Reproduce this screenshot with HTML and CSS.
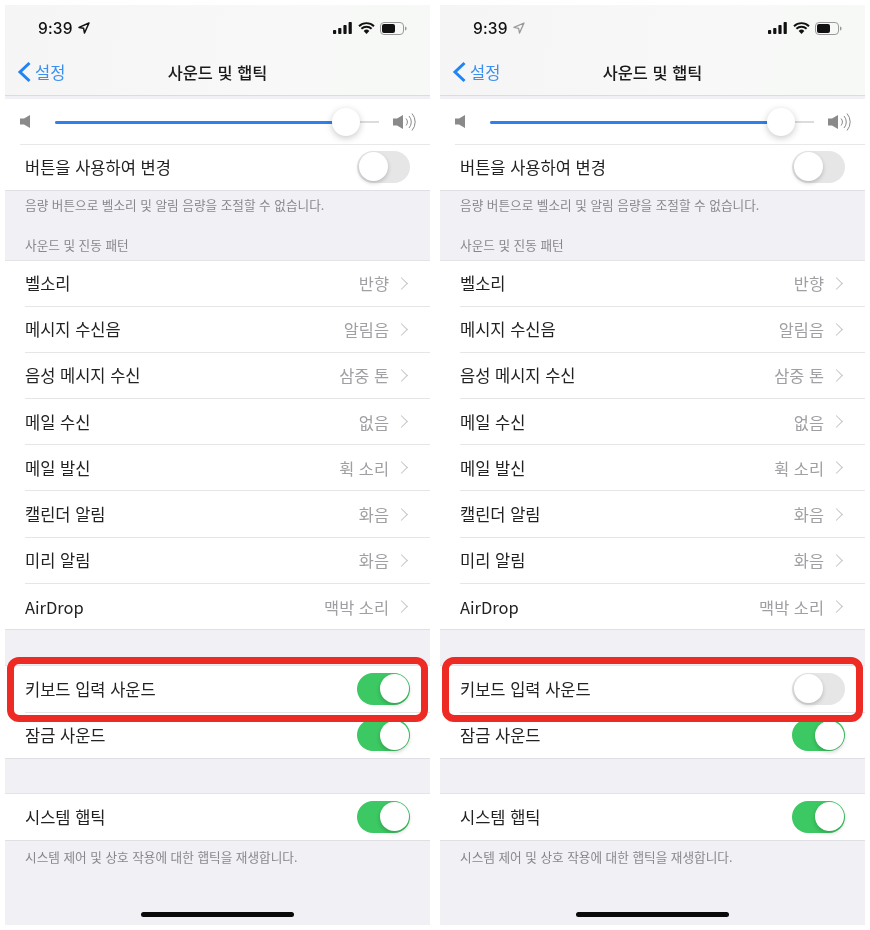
FILE: index.html
```html
<!DOCTYPE html>
<html lang="ko">
<head>
<meta charset="utf-8">
<title>사운드 및 햅틱</title>
<link rel="stylesheet" href="styles.css">
</head>
<body>
<main class="page">

<section class="phone">
  <header class="bar">
    <div class="status">
      <span class="time">9:39</span>
      <svg class="loc" width="12" height="12" viewBox="0 0 12 12"><path d="M11 1 1 5.400l4.600.9.9 4.700z" fill="none" stroke="#111" stroke-width="1.500" stroke-linejoin="round"/></svg>
      <span class="grow"></span>
      <svg width="20" height="12" viewBox="0 0 20 12"><rect x="0" y="8" width="3.200" height="4" rx=".8"/><rect x="5.200" y="6" width="3.200" height="6" rx=".8"/><rect x="10.400" y="3" width="3.200" height="9" rx=".8"/><rect x="15.600" y="0" width="3.200" height="12" rx=".8"/></svg>
      <svg class="wifi" width="17" height="12" viewBox="0 0 17 12"><path d="M1 4.200a10.800 10.800 0 0 1 15 0M3.400 6.800a7.300 7.300 0 0 1 10.200 0" fill="none" stroke="#111" stroke-width="1.900"/><path d="M5.700 8.900a4 4 0 0 1 5.600 0L8.500 12z" fill="#111"/></svg>
      <svg width="27" height="13" viewBox="0 0 27 13"><rect x=".5" y=".5" width="23" height="12" rx="3.500" fill="none" stroke="#999"/><rect x="2" y="2" width="13" height="9" rx="2" fill="#111"/><path d="M25 4.500c1 .3 1.600 1 1.600 2s-.6 1.700-1.600 2z" fill="#999"/></svg>
    </div>
    <nav class="nav">
      <span class="back">
        <svg width="15" height="22" viewBox="0 0 15 22"><path d="M12.500 2 3 11l9.500 9" fill="none" stroke="#1f84f5" stroke-width="3"/></svg>
        설정
      </span>
      <h1 class="title">사운드 및 햅틱</h1>
    </nav>
  </header>

  <div class="group first">
    <div class="slider">
      <svg class="vol-low" width="11" height="13" viewBox="0 0 11 13"><path d="M0 3.500h4L10 0v13L4 9.500H0z" fill="#8a8a8a"/></svg>
      <div class="track"><div class="fill"></div><div class="thumb"></div></div>
      <svg width="24" height="22" viewBox="0 0 24 22"><path d="M1 7.500h4l6-3.500v14l-6-3.500H1z" fill="#8a8a8a"/><path d="M14 7.500a5 5 0 0 1 0 7M17 5a9 9 0 0 1 0 12M20 2.500a13 13 0 0 1 0 17" fill="none" stroke="#8a8a8a" stroke-width="1"/></svg>
    </div>
    <div class="row last"><span class="label">버튼을 사용하여 변경</span><span class="toggle"></span></div>
  </div>
  <p class="note">음량 버튼으로 벨소리 및 알림 음량을 조절할 수 없습니다.</p>
  <p class="caption">사운드 및 진동 패턴</p>

  <div class="group">
    <div class="row"><span class="label">벨소리</span><span class="value">반향</span><i class="chev"></i></div>
    <div class="row"><span class="label">메시지 수신음</span><span class="value">알림음</span><i class="chev"></i></div>
    <div class="row"><span class="label">음성 메시지 수신</span><span class="value">삼중 톤</span><i class="chev"></i></div>
    <div class="row"><span class="label">메일 수신</span><span class="value">없음</span><i class="chev"></i></div>
    <div class="row"><span class="label">메일 발신</span><span class="value">휙 소리</span><i class="chev"></i></div>
    <div class="row"><span class="label">캘린더 알림</span><span class="value">화음</span><i class="chev"></i></div>
    <div class="row"><span class="label">미리 알림</span><span class="value">화음</span><i class="chev"></i></div>
    <div class="row last"><span class="label">AirDrop</span><span class="value">맥박 소리</span><i class="chev"></i></div>
  </div>

  <div class="group gap-a">
    <div class="row"><span class="label">키보드 입력 사운드</span><span class="toggle on"></span></div>
    <div class="row last"><span class="label">잠금 사운드</span><span class="toggle on"></span></div>
  </div>

  <div class="group gap-b">
    <div class="row last"><span class="label">시스템 햅틱</span><span class="toggle on"></span></div>
  </div>
  <p class="note">시스템 제어 및 상호 작용에 대한 햅틱을 재생합니다.</p>
  <div class="home"></div>
  <div class="mark"></div>
</section>

<section class="phone">
  <header class="bar">
    <div class="status">
      <span class="time">9:39</span>
      <svg class="loc" width="12" height="12" viewBox="0 0 12 12"><path d="M11 1 1 5.400l4.600.9.9 4.700z" fill="none" stroke="#999" stroke-width="1.300" stroke-linejoin="round"/></svg>
      <span class="grow"></span>
      <svg width="20" height="12" viewBox="0 0 20 12"><rect x="0" y="8" width="3.200" height="4" rx=".8"/><rect x="5.200" y="6" width="3.200" height="6" rx=".8"/><rect x="10.400" y="3" width="3.200" height="9" rx=".8"/><rect x="15.600" y="0" width="3.200" height="12" rx=".8"/></svg>
      <svg class="wifi" width="17" height="12" viewBox="0 0 17 12"><path d="M1 4.200a10.800 10.800 0 0 1 15 0M3.400 6.800a7.300 7.300 0 0 1 10.200 0" fill="none" stroke="#111" stroke-width="1.900"/><path d="M5.700 8.900a4 4 0 0 1 5.600 0L8.500 12z" fill="#111"/></svg>
      <svg width="27" height="13" viewBox="0 0 27 13"><rect x=".5" y=".5" width="23" height="12" rx="3.500" fill="none" stroke="#999"/><rect x="2" y="2" width="13" height="9" rx="2" fill="#111"/><path d="M25 4.500c1 .3 1.600 1 1.600 2s-.6 1.700-1.600 2z" fill="#999"/></svg>
    </div>
    <nav class="nav">
      <span class="back">
        <svg width="15" height="22" viewBox="0 0 15 22"><path d="M12.500 2 3 11l9.500 9" fill="none" stroke="#1f84f5" stroke-width="3"/></svg>
        설정
      </span>
      <h1 class="title">사운드 및 햅틱</h1>
    </nav>
  </header>

  <div class="group first">
    <div class="slider">
      <svg class="vol-low" width="11" height="13" viewBox="0 0 11 13"><path d="M0 3.500h4L10 0v13L4 9.500H0z" fill="#8a8a8a"/></svg>
      <div class="track"><div class="fill"></div><div class="thumb"></div></div>
      <svg width="24" height="22" viewBox="0 0 24 22"><path d="M1 7.500h4l6-3.500v14l-6-3.500H1z" fill="#8a8a8a"/><path d="M14 7.500a5 5 0 0 1 0 7M17 5a9 9 0 0 1 0 12M20 2.500a13 13 0 0 1 0 17" fill="none" stroke="#8a8a8a" stroke-width="1"/></svg>
    </div>
    <div class="row last"><span class="label">버튼을 사용하여 변경</span><span class="toggle"></span></div>
  </div>
  <p class="note">음량 버튼으로 벨소리 및 알림 음량을 조절할 수 없습니다.</p>
  <p class="caption">사운드 및 진동 패턴</p>

  <div class="group">
    <div class="row"><span class="label">벨소리</span><span class="value">반향</span><i class="chev"></i></div>
    <div class="row"><span class="label">메시지 수신음</span><span class="value">알림음</span><i class="chev"></i></div>
    <div class="row"><span class="label">음성 메시지 수신</span><span class="value">삼중 톤</span><i class="chev"></i></div>
    <div class="row"><span class="label">메일 수신</span><span class="value">없음</span><i class="chev"></i></div>
    <div class="row"><span class="label">메일 발신</span><span class="value">휙 소리</span><i class="chev"></i></div>
    <div class="row"><span class="label">캘린더 알림</span><span class="value">화음</span><i class="chev"></i></div>
    <div class="row"><span class="label">미리 알림</span><span class="value">화음</span><i class="chev"></i></div>
    <div class="row last"><span class="label">AirDrop</span><span class="value">맥박 소리</span><i class="chev"></i></div>
  </div>

  <div class="group gap-a">
    <div class="row"><span class="label">키보드 입력 사운드</span><span class="toggle"></span></div>
    <div class="row last"><span class="label">잠금 사운드</span><span class="toggle on"></span></div>
  </div>

  <div class="group gap-b">
    <div class="row last"><span class="label">시스템 햅틱</span><span class="toggle on"></span></div>
  </div>
  <p class="note">시스템 제어 및 상호 작용에 대한 햅틱을 재생합니다.</p>
  <div class="home"></div>
  <div class="mark"></div>
</section>

</main>
</body>
</html>
```

FILE: styles.css
```css
* { box-sizing: border-box; }
html, body { margin: 0; padding: 0; background: #fff; }
body {
  width: 870px;
  height: 930px;
  overflow: hidden;
  font-family: "Noto Sans CJK KR", "Noto Sans", sans-serif;
  color: #222;
}
.page { display: flex; gap: 10px; padding: 5px; }
.phone {
  position: relative;
  width: 425px;
  height: 920px;
  background: #f0f0f5;
  display: flex;
  flex-direction: column;
  filter: blur(.4px);
}
.bar {
  height: 91px;
  background: linear-gradient(100deg, #f5f5f5, #f8f8f8 60%, #f6f9f6);
  border-bottom: 1px solid #dcdce0;
  flex: none;
}
.status {
  height: 46px;
  display: flex;
  align-items: center;
  gap: 5px;
  padding: 0 23px 0 33px;
}
.status svg { fill: #111; flex: none; }
.time { font-family: Inter, "Liberation Sans", sans-serif; font-size: 15.500px; font-weight: 500; color: #111; letter-spacing: .2px; }
.grow { flex: 1; }
.nav {
  position: relative;
  height: 44px;
  display: flex;
  align-items: flex-start;
  justify-content: center;
  padding-top: 9px;
}
.back {
  position: absolute;
  left: 12px;
  top: 9px;
  display: flex;
  align-items: center;
  gap: 3px;
  font-size: 16.500px;
  line-height: 24px;
  color: #3a90f0;
}
.title { margin: 0; font-size: 16.400px; font-weight: 500; color: #1a1a1a; line-height: 24px; }
.group {
  background: #fff;
  border-top: 1px solid #e4e4e8;
  border-bottom: 1px solid #e0e0e4;
  flex: none;
}
.group.first { margin-top: 3px; border-top: 0; }
.gap-a { margin-top: 35px; }
.gap-b { margin-top: 34px; }
.slider {
  height: 46px;
  margin-left: 15px;
  display: flex;
  align-items: center;
  padding: 0 14px 0 0;
  border-bottom: 1px solid #e8e8ea;
}
.vol-low { margin-right: 24px; }
.track { position: relative; flex: 1; height: 2px; background: #dcdcdc; margin-right: 13px; }
.fill { width: 92%; height: 3px; background: #2f80ed; border-radius: 2px; }
.thumb {
  position: absolute;
  left: 277px;
  top: -13px;
  width: 28px;
  height: 28px;
  border-radius: 50%;
  background: #fff;
  box-shadow: 0 2px 7px rgba(0,0,0,.22);
}
.row {
  height: 46.200px;
  margin-left: 20px;
  padding-right: 20px;
  display: flex;
  align-items: center;
  border-bottom: 1px solid #e6e6e8;
}
.row.last { border-bottom: 0; height: 45.500px; }
.group.first .row.last { height: 45px; padding-bottom: 2px; }
.label { flex: 1; font-size: 16.500px; color: #222; }
.value { font-size: 16.400px; color: #a0a0a4; }
.chev {
  width: 9px;
  height: 9px;
  margin: 0 4px 0 8px;
  border-top: 1.600px solid #c4c4c8;
  border-right: 1.600px solid #c4c4c8;
  transform: rotate(45deg);
}
.toggle {
  position: relative;
  width: 53px;
  height: 32px;
  border-radius: 16px;
  background: #e6e6e6;
  flex: none;
}
.toggle::after {
  content: "";
  position: absolute;
  left: 1.500px;
  top: 1.500px;
  width: 29px;
  height: 29px;
  border-radius: 50%;
  background: #fff;
  box-shadow: 0 2px 4px rgba(0,0,0,.2);
}
.toggle.on { background: #3cc862; }
.toggle.on::after { left: 22.500px; }
.note { margin: 5px 0 0 20px; font-size: 12.650px; line-height: 17px; color: #88888c; }
.gap-b + .note { margin-top: 7px; }
.caption { margin: 23px 0 0 20px; height: 23.500px; font-size: 12.650px; line-height: 17px; color: #88888c; }
.home {
  position: absolute;
  left: 136px;
  bottom: 8px;
  width: 153px;
  height: 5px;
  border-radius: 3px;
  background: #0a0a0a;
}
.mark {
  position: absolute;
  left: 2px;
  top: 652px;
  width: 421px;
  height: 65px;
  border: 7.500px solid #ee2a24;
  border-radius: 12px;
}
```
